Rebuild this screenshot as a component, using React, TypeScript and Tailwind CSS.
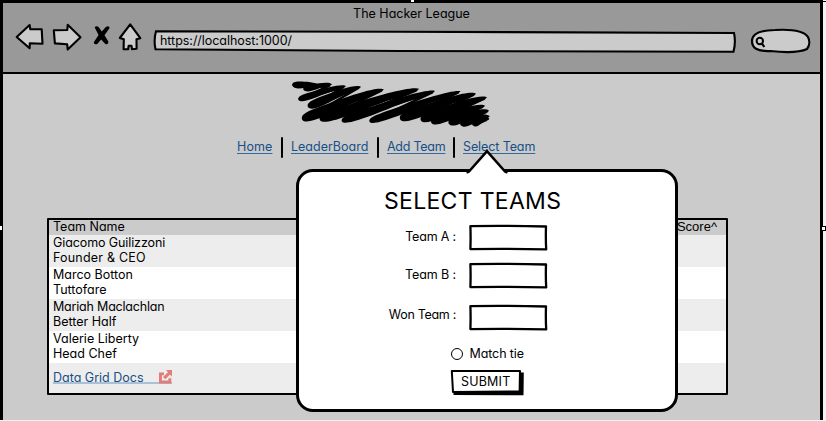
import type { ReactNode } from 'react';

// Each stroke runs from its heavy lower-left end to its tapered upper-right end.
const strokes = [
  [216, 31, 300, 34, 19],
  [250, 44, 336, 28, 17],
  [235, 75, 378, 33, 19],
  [264, 97, 423, 35, 24],
  [247, 135, 492, 43, 29],
  [300, 136, 597, 42, 28],
  [366, 140, 645, 48, 23],
  [449, 141, 722, 49, 22],
  [541, 134, 768, 56, 28],
  [603, 137, 801, 67, 26],
  [634, 144, 795, 92, 23],
  [686, 146, 807, 107, 24],
  [721, 149, 809, 124, 22],
  [757, 150, 808, 131, 18],
];

function strokePath([x1, y1, x2, y2, w]: number[]) {
  const dx = x2 - x1;
  const dy = y2 - y1;
  const len = Math.hypot(dx, dy);
  const nx = dy / len;
  const ny = -dx / len;
  const at = (t: number, o: number) =>
    `${(x1 + dx * t + nx * o).toFixed(1)} ${(y1 + dy * t + ny * o).toFixed(1)}`;
  const end = Math.min(0.4, 14 / len);
  return `M${at(0, 0)} C${at(0, w * 0.6)} ${at(end, w * 0.7)} ${at(0.35, w * 0.65)} C${at(0.6, w * 0.65)} ${at(0.95, w * 0.55)} ${at(1, 0)} C${at(0.97, -w * 0.25)} ${at(0.75, -w * 0.1)} ${at(0.5, -w * 0.3)} C${at(0.3, -w * 0.45)} ${at(end / 2, -w * 0.7)} ${at(0, 0)}Z`;
}

function Scribble() {
  const zigzag = strokes.map(([x1, y1, x2, y2]) => `${x1 + 10},${y1 - 4} ${x2 - 8},${y2 + 4}`).join(' ');
  return (
    <svg className="ml-[287px] mt-[4px] h-[50px] w-[203px] shrink-0" viewBox="210 9 609 150">
      <polyline points={zigzag} fill="none" stroke="#000" strokeWidth="7" strokeLinejoin="round" />
      {strokes.map((s) => (
        <path key={s.join('-')} d={strokePath(s)} fill="#000" />
      ))}
    </svg>
  );
}

function BackIcon() {
  return (
    <svg className="h-[30px] w-[30px]" viewBox="15 22 30 30" fill="#cbcbcb" stroke="#000" strokeWidth="2.1" strokeLinejoin="round">
      <path d="M16.7 37 L29.6 25 L30.3 29.3 L41.7 29.3 L42.5 43.8 L29.8 43.3 L29.6 48.3 Z" />
    </svg>
  );
}

function ForwardIcon() {
  return (
    <svg className="h-[30px] w-[30px]" viewBox="52 22 30 30" fill="#cbcbcb" stroke="#000" strokeWidth="2.1" strokeLinejoin="round">
      <path d="M53.8 30.2 L67.3 30 L67.7 24.8 L80.5 37.2 L67.7 49.6 L67.2 44.3 L54.9 43.4 Z" />
    </svg>
  );
}

function StopIcon() {
  return (
    <svg className="h-[20px] w-[17px]" viewBox="93 25 17 20" fill="#000">
      <path d="M94.7 27.5 Q96 25.4 98.6 27 L101.8 31.4 L105.8 26.9 Q109.3 25.4 109.6 28 L104.5 35.2 L108.3 41.5 Q108.6 44.8 105.6 44.2 L101.1 39.4 L97.3 44 Q93.7 45 93.8 42.3 L98.6 35 Z" />
    </svg>
  );
}

function HomeIcon() {
  return (
    <svg className="h-[30px] w-[24px]" viewBox="118 22 24 30" fill="#cbcbcb" stroke="#000" strokeWidth="2.1" strokeLinejoin="round">
      <path d="M130.2 24.3 L119.8 38 L123.8 39.3 L123.6 49.3 L128.2 49.2 L128.6 45.8 L131.5 45.8 L132 49.2 L136.6 48.8 L136.5 39.2 L140.3 38.2 Z" />
    </svg>
  );
}

function Field({ label, text = '', className = '' }: { label: string; text?: string; className?: string }) {
  return (
    <div className={`flex h-[27px] items-center ${className}`}>
      <span className={`w-[157px] whitespace-nowrap text-right ${text}`}>{label}</span>
      <svg className="ml-[12px] h-[27px] w-[80px]" viewBox="0 0 80 27" fill="#fff" stroke="#000" strokeWidth="2.3" strokeLinejoin="round">
        <path d="M2.4 2.2 Q35 1.5 78 2.5 Q77.6 14 78.2 25.4 Q40 24.5 2.4 25.1 Q2.8 14 2.4 2.2 Z" />
      </svg>
    </div>
  );
}

function NavLink({ children, className = '' }: { children: string; className?: string }) {
  return (
    <a className={`-mt-[2px] block whitespace-nowrap leading-[15px] text-[#174f86] underline decoration-[#32699f] decoration-1 underline-offset-[2px] [text-decoration-skip-ink:none] ${className}`}>
      {children}
    </a>
  );
}

function Divider({ className = '' }: { className?: string }) {
  return <span className={`h-[21px] w-[2px] rounded-sm bg-black ${className}`} />;
}

function Row({ children, className }: { children: ReactNode; className: string }) {
  return <div className={`h-[32px] pl-[4px] leading-[15px] ${className}`}>{children}</div>;
}

function SelectTeamsPopup() {
  return (
    <section className="absolute left-[296px] top-[169px] h-[243px] w-[382px] rounded-[17px] border-[3px] border-black bg-white">
      <svg className="absolute left-[166px] top-[-23px] h-[25px] w-[44px]" viewBox="465 149 44 25">
        <path d="M468 174 L468.5 172 L487 151 L505.5 172 L506 174 Z" fill="#fff" />
        <path d="M466.5 172.5 L469 171.5 L487 151.2 L505 171.5 L507.5 172.5" fill="none" stroke="#000" strokeWidth="2.6" />
      </svg>
      <h1 className="ml-[85px] mt-[14px] h-[30px] text-[23px] leading-[30px] tracking-[0.3px]">SELECT TEAMS</h1>
      <Field label="Team A :" className="mt-[8px]" text="tracking-[-0.18px]" />
      <Field label="Team B :" className="mt-[11px]" text="tracking-[-0.1px]" />
      <Field label="Won Team :" className="mt-[15px]" text="-mt-[5px] tracking-[-0.3px]" />
      <label className="ml-[152px] mt-[15px] flex h-[16px] items-center">
        <span className="h-[12px] w-[12px] rounded-full border border-black" />
        <span className="ml-[6.5px] tracking-[-0.1px]">Match tie</span>
      </label>
      <button className="relative ml-[151px] mt-[7px] block h-[27px] w-[75px]">
        <svg className="absolute inset-0 h-full w-full" viewBox="0 0 75 27">
          <path d="M3.5 4 L73.8 3.5 L73.5 26.3 L3.5 26 Z" fill="#000" />
          <path d="M1.8 2 L70 2 L69.6 22.3 L3 23 Z" fill="#fff" stroke="#000" strokeWidth="2" strokeLinejoin="round" />
        </svg>
        <span className="absolute left-[11px] top-[5px] leading-[16px] tracking-[0.2px]">SUBMIT</span>
      </button>
    </section>
  );
}

export default function App() {
  return (
    <div className="relative h-[421px] w-[826px] overflow-hidden bg-[#f2f2f2] font-['Inter',sans-serif] text-[12.5px] text-black [font-feature-settings:'cv11']">
      <main className="flex h-[420px] w-[823px] flex-col border-x-[3px] border-t-[3px] border-black bg-[#cbcbcb]">
        <header className="h-[71px] shrink-0 border-b-[2px] border-black bg-[#999]">
          <div className="h-[21px] text-center leading-[21px]">The Hacker League</div>
          <div className="flex h-[30px] items-center">
            <span className="-mt-[4px] ml-[12px]"><BackIcon /></span>
            <span className="-mt-[4px] ml-[7px]"><ForwardIcon /></span>
            <span className="-mt-[8px] ml-[11px]"><StopIcon /></span>
            <span className="-mt-[4px] ml-[8px]"><HomeIcon /></span>
            <span className="relative ml-[11px] mt-[5px] h-[24px] w-[583px]">
              <svg className="absolute inset-0 h-full w-full" viewBox="153 30 583 24">
                <path d="M156 31.3 L400 31.7 L734 33 Q736 42 733.5 51.7 L400 51 L155.5 49.3 Q153.5 40 156 31.3 Z" fill="#cbcbcb" stroke="#000" strokeWidth="2.1" />
              </svg>
              <span className="absolute left-[7px] top-[3px] leading-[16px] tracking-[-0.04px]">https://localhost:1000/</span>
            </span>
            <svg className="ml-[14px] mt-[3px] h-[26px] w-[62px]" viewBox="750 28 62 26" fill="#cbcbcb" stroke="#000">
              <path d="M752 41 C752 33 762 30.2 775 30 C792 29 804 31 808 37 C810 41 809.5 46 807 49 C800 52.3 784 52.5 770 51 C757 51.5 752 48 752 41 Z" strokeWidth="2.2" />
              <circle cx="759.8" cy="41" r="3.2" strokeWidth="2" />
              <path d="M762 43.6 L764.3 47" strokeWidth="2.2" />
            </svg>
          </div>
        </header>

        <Scribble />

        <nav className="ml-[234px] mt-[8px] flex h-[22px] shrink-0 items-center">
          <NavLink className="w-[36px] tracking-[0.1px]">Home</NavLink>
          <Divider className="ml-[8px]" />
          <NavLink className="ml-[8px] w-[78px]">LeaderBoard</NavLink>
          <Divider className="ml-[8px]" />
          <NavLink className="ml-[8px] w-[59px] tracking-[-0.25px]">Add Team</NavLink>
          <Divider className="ml-[7px]" />
          <NavLink className="ml-[8px] w-[73px] tracking-[-0.1px]">Select Team</NavLink>
        </nav>

        <section className="ml-[44px] mt-[60px] h-[177px] w-[681px] shrink-0 rounded-[1px] border-2 border-black bg-[#ededed]">
          <div className="flex h-[15px] justify-between bg-[#cbcbcb] pl-[4px] pr-[9px] leading-[13px]">
            <span>Team Name</span>
            <span className="font-['Liberation_Sans',sans-serif] text-[13px]">Score^</span>
          </div>
          <Row className="bg-[#ededed] tracking-[-0.1px]"><p>Giacomo Guilizzoni</p><p className="tracking-[0.2px]">Founder &amp; CEO</p></Row>
          <Row className="bg-white"><p>Marco Botton</p><p>Tuttofare</p></Row>
          <Row className="bg-[#ededed]"><p className="tracking-[-0.2px]">Mariah Maclachlan</p><p>Better Half</p></Row>
          <Row className="bg-white"><p>Valerie Liberty</p><p>Head Chef</p></Row>
          <div className="pl-[4px] pt-[7px]">
            <a className="flex h-[14px] w-[119px] justify-between border-b-2 border-[#a9c0d6] leading-[15px] text-[#174f86]">
              <span>Data Grid Docs</span>
              <svg className="h-[14px] w-[13px]" viewBox="0 0 13 14" fill="#e27c76">
                <path d="M0 2.5 H5 V5.3 H2.9 V10.6 H9.4 V8.3 H12.3 V13.5 H0 Z" />
                <path d="M7 0 H13 V6.4 L10.9 4.4 L6.4 9.2 L4 7.1 L9 2.3 Z" />
              </svg>
            </a>
          </div>
        </section>
      </main>

      <SelectTeamsPopup />

      <span className="absolute left-0 top-[226px] h-[4px] w-[2px] bg-white" />
      <span className="absolute left-[411px] top-0 h-[2px] w-[3px] bg-white" />
      <span className="absolute left-[821px] top-[226px] h-[5px] w-[5px] border border-black bg-white" />
      <span className="absolute left-[823px] top-[1px] h-px w-[3px] bg-black" />
    </div>
  );
}
